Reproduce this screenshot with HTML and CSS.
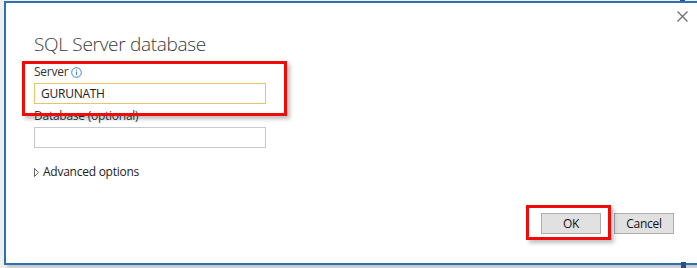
FILE: index.html
```html
<!DOCTYPE html>
<html>
<head>
<meta charset="utf-8">
<link rel="stylesheet" href="styles.css">
</head>
<body>
<div class="dialog">
  <div class="close" aria-label="Close">
    <svg width="11" height="11" viewBox="0 0 11 11"><path d="M0.5 0.5 L10.5 10.5 M10.5 0.5 L0.5 10.5" stroke="#707070" stroke-width="1.3" fill="none"/></svg>
  </div>
  <div class="content">
    <h1 class="title">SQL Server database</h1>
    <div class="field">
      <div class="label">Server <span class="info"><svg width="11" height="11" viewBox="0 0 11 11"><circle cx="5.5" cy="5.5" r="4.8" stroke="#3b7fd0" stroke-width="1" fill="none"/><rect x="5" y="4.5" width="1" height="3.5" fill="#3b7fd0"/><rect x="5" y="2.6" width="1" height="1" fill="#3b7fd0"/></svg></span></div>
      <div class="input active">GURUNATH</div>
    </div>
    <div class="field second">
      <div class="label">Database (optional)</div>
      <div class="input"></div>
    </div>
    <div class="advanced"><span class="tri"><svg width="5" height="9" viewBox="0 0 5 9"><path d="M0.5 0.5 L4.5 4.5 L0.5 8.5 Z" stroke="#555" stroke-width="0.9" fill="none"/></svg></span>Advanced options</div>
    <div class="buttons">
      <div class="btn">OK</div>
      <div class="btn">Cancel</div>
    </div>
  </div>
  <div class="mark mark-server"></div>
  <div class="mark mark-ok"></div>
</div>
<div class="taskbit taskbit-top"></div>
<div class="taskbit taskbit-bottom"></div>
</body>
</html>
```
FILE: styles.css
```css
html, body {
  margin: 0;
  padding: 0;
}
body {
  background: #f0f0f0;
  width: 697px;
  height: 268px;
  overflow: hidden;
  position: relative;
  font-family: "Segoe UI", "Open Sans", "Noto Sans", sans-serif;
  font-size: 12px;
  letter-spacing: -0.25px;
  color: #222;
}
.dialog {
  position: relative;
  margin: 1px 0 0 4px;
  height: 260px;
  background: #fff;
  border-top: 2px solid #2f6fb3;
  border-left: 2px solid #2f6fb3;
  border-bottom: 2px solid #2f6fb3;
  box-shadow: 3px 3px 3px rgba(0,0,0,0.18);
}
.close {
  position: absolute;
  right: 9px;
  top: 8px;
  width: 11px;
  height: 11px;
}
.close svg { display: block; }
.content {
  padding: 29px 0 0 28px;
}
.title {
  margin: 0;
  font-family: "Segoe UI Light", "Open Sans", "Noto Sans", sans-serif;
  font-weight: 300;
  font-size: 19px;
  letter-spacing: -0.3px;
  line-height: 24px;
  color: #3a3a3a;
}
.field {
  margin-top: 8px;
  width: 232px;
}
.field.second { margin-top: 4px; }
.label {
  line-height: 16px;
  display: flex;
  align-items: center;
  gap: 3px;
  color: #333;
}
.info { display: inline-flex; }
.info svg { display: block; }
.input {
  margin-top: 3px;
  height: 19px;
  border: 1px solid #c5cad2;
  line-height: 19px;
  padding-left: 6px;
  color: #222;
}
.input.active {
  border-color: #e6c46c;
}
.advanced {
  margin-top: 16px;
  display: flex;
  align-items: center;
  gap: 4px;
  line-height: 16px;
  color: #222;
}
.tri { display: inline-flex; }
.tri svg { display: block; }
.buttons {
  display: flex;
  justify-content: flex-end;
  gap: 13px;
  margin-top: 33px;
  padding-right: 23px;
}
.btn {
  width: 58px;
  height: 19px;
  line-height: 19px;
  text-align: center;
  background: #e1e1e1;
  border: 1px solid #adadad;
  color: #111;
}
.mark {
  position: absolute;
  border: 3px solid #f00a0a;
  box-shadow: 3px 3px 4px rgba(0,0,0,0.25);
}
.mark-server {
  left: 16px;
  top: 58px;
  width: 259px;
  height: 49px;
}
.mark-ok {
  left: 520px;
  top: 202px;
  width: 79px;
  height: 29px;
}
.taskbit {
  position: absolute;
  background: #2b4f7a;
  width: 5px;
}
.taskbit-top { left: 680px; top: 0; height: 1px; }
.taskbit-bottom { left: 681px; top: 262px; height: 6px; }
```
